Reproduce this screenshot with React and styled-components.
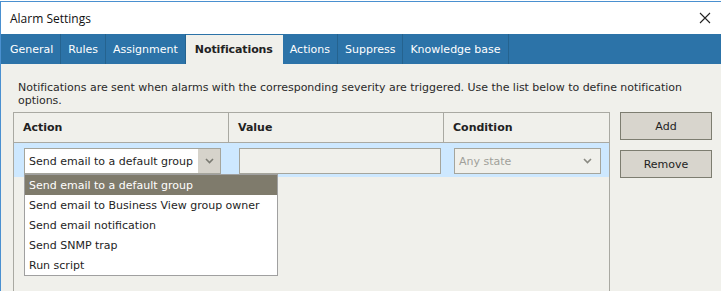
import React from 'react'
import styled, { createGlobalStyle } from 'styled-components'

const GlobalStyle = createGlobalStyle`
  html, body {
    margin: 0;
    padding: 0;
    background: #ffffff;
    overflow: hidden;
  }
  body {
    font-family: "DejaVu Sans", Verdana, sans-serif;
    font-size: 11px;
    color: #1e1e1e;
  }
`

const Window = styled.div`
  margin-top: 1px;
  height: 290px;
  border-left: 1px solid #4a90d0;
  border-top: 1px solid #4a90d0;
  display: flex;
  flex-direction: column;
  box-sizing: border-box;
`

const TitleBar = styled.div`
  height: 32px;
  flex: none;
  display: flex;
  align-items: center;
  justify-content: space-between;
  padding: 0 9px 0 9px;
  background: #ffffff;
  font-family: "Open Sans", "Noto Sans", sans-serif;
  font-size: 12px;
  color: #111;
`

const CloseIcon = () => (
  <svg width="12" height="12" viewBox="0 0 12 12" style={{ marginRight: 1 }}>
    <path d="M1 1 L11 11 M11 1 L1 11" stroke="#222" strokeWidth="1.1" fill="none" />
  </svg>
)

const TabBar = styled.div`
  height: 30px;
  flex: none;
  background: #2c73a8;
  display: flex;
  align-items: flex-end;
  padding-left: 2px;
`

const Tab = styled.div`
  height: ${p => (p.$active ? '29px' : '30px')};
  box-sizing: border-box;
  display: flex;
  align-items: center;
  padding: 0 ${p => (p.$active ? '9px' : '7px')};
  border-right: 1px solid ${p => (p.$active ? 'transparent' : '#25638f')};
  background: ${p => (p.$active ? '#f0f0eb' : 'transparent')};
  color: ${p => (p.$active ? '#222' : '#ffffff')};
  font-weight: ${p => (p.$active ? 'bold' : 'normal')};
  letter-spacing: ${p => (p.$active ? '-0.1px' : '0')};
`

const Content = styled.div`
  flex: 1;
  background: #f0f0eb;
  padding: 17px 0 0 12px;
  display: flex;
  flex-direction: column;
  overflow: hidden;
`

const Description = styled.p`
  margin: 0 0 0 5px;
  line-height: 13px;
  color: #2a2a2a;
  letter-spacing: -0.03px;
  width: 690px;
`

const Main = styled.div`
  display: flex;
  margin-top: 5px;
  flex: 1;
`

const Grid = styled.div`
  width: 597px;
  box-sizing: border-box;
  border: 1px solid #a9a9a2;
  border-bottom: none;
  display: flex;
  flex-direction: column;
`

const Row = styled.div`
  display: grid;
  grid-template-columns: 215px 215px 1fr;
  position: relative;
  height: ${p => p.$height}px;
  background: ${p => p.$bg || 'transparent'};
  border-bottom: ${p => (p.$divider ? '1px solid #a9a9a2' : 'none')};
`

const HeadCell = styled.div`
  display: flex;
  align-items: center;
  padding-left: 9px;
  font-weight: bold;
  color: #222;
  border-right: ${p => (p.$last ? 'none' : '1px solid #a9a9a2')};
`

const Cell = styled.div`
  padding: 5px 0 0 10px;
  border-right: 1px solid transparent;
`

const Select = styled.div`
  height: 26px;
  width: ${p => p.$width}px;
  box-sizing: border-box;
  border: 1px solid #a5a59c;
  background: ${p => (p.$disabled ? '#f0f0eb' : '#ffffff')};
  display: flex;
  align-items: stretch;
`

const SelectText = styled.div`
  flex: 1;
  display: flex;
  align-items: center;
  padding-left: 4px;
  color: ${p => (p.$disabled ? '#a0a09a' : '#1e1e1e')};
  white-space: nowrap;
  overflow: hidden;
`

const SelectArrow = styled.div`
  width: ${p => (p.$filled ? '22px' : '26px')};
  flex: none;
  background: ${p => (p.$filled ? '#d6d3cb' : 'transparent')};
  display: flex;
  align-items: center;
  justify-content: center;
`

const Chevron = ({ color }) => (
  <svg width="9" height="6" viewBox="0 0 9 6">
    <path d="M1 1 L4.5 4.5 L8 1" stroke={color} strokeWidth="1.6" fill="none" />
  </svg>
)

const TextInput = styled.div`
  height: 26px;
  width: 202px;
  box-sizing: border-box;
  border: 1px solid #a5a59c;
  background: #f0f0eb;
`

const Dropdown = styled.ul`
  position: absolute;
  left: 10px;
  top: 31px;
  width: 254px;
  margin: 0;
  padding: 0;
  list-style: none;
  background: #ffffff;
  border: 1px solid #a0a0a0;
  box-sizing: border-box;
  z-index: 2;
`

const Option = styled.li`
  height: 20px;
  display: flex;
  align-items: center;
  padding-left: 4px;
  background: ${p => (p.$selected ? '#7f7b6c' : 'transparent')};
  color: ${p => (p.$selected ? '#ffffff' : '#1e1e1e')};
  white-space: nowrap;
`

const Buttons = styled.div`
  margin-left: 10px;
  display: flex;
  flex-direction: column;
  gap: 10px;
`

const Button = styled.button`
  width: 92px;
  height: 28px;
  background: #d8d5cd;
  border: 1px solid #7d7d70;
  font-family: inherit;
  font-size: 11px;
  color: #1e1e1e;
  padding: 0;
`

const tabs = ['General', 'Rules', 'Assignment', 'Notifications', 'Actions', 'Suppress', 'Knowledge base']
const options = [
  'Send email to a default group',
  'Send email to Business View group owner',
  'Send email notification',
  'Send SNMP trap',
  'Run script',
]

export default function App() {
  return (
    <>
      <GlobalStyle />
      <Window>
        <TitleBar>
          <span>Alarm Settings</span>
          <CloseIcon />
        </TitleBar>
        <TabBar>
          {tabs.map(t => (
            <Tab key={t} $active={t === 'Notifications'}>{t}</Tab>
          ))}
        </TabBar>
        <Content>
          <Description>
            Notifications are sent when alarms with the corresponding severity are triggered. Use the list below to define notification options.
          </Description>
          <Main>
            <Grid>
              <Row $height={29} $divider>
                <HeadCell>Action</HeadCell>
                <HeadCell>Value</HeadCell>
                <HeadCell $last>Condition</HeadCell>
              </Row>
              <Row $height={34} $bg="#cde8ff">
                <Cell>
                  <Select $width={197}>
                    <SelectText>Send email to a default group</SelectText>
                    <SelectArrow $filled><Chevron color="#7a7a72" /></SelectArrow>
                  </Select>
                </Cell>
                <Cell>
                  <TextInput />
                </Cell>
                <Cell>
                  <Select $width={147} $disabled>
                    <SelectText $disabled>Any state</SelectText>
                    <SelectArrow><Chevron color="#8a8a82" /></SelectArrow>
                  </Select>
                </Cell>
                <Dropdown>
                  {options.map((o, i) => (
                    <Option key={o} $selected={i === 0}>{o}</Option>
                  ))}
                </Dropdown>
              </Row>
            </Grid>
            <Buttons>
              <Button>Add</Button>
              <Button>Remove</Button>
            </Buttons>
          </Main>
        </Content>
      </Window>
    </>
  )
}
